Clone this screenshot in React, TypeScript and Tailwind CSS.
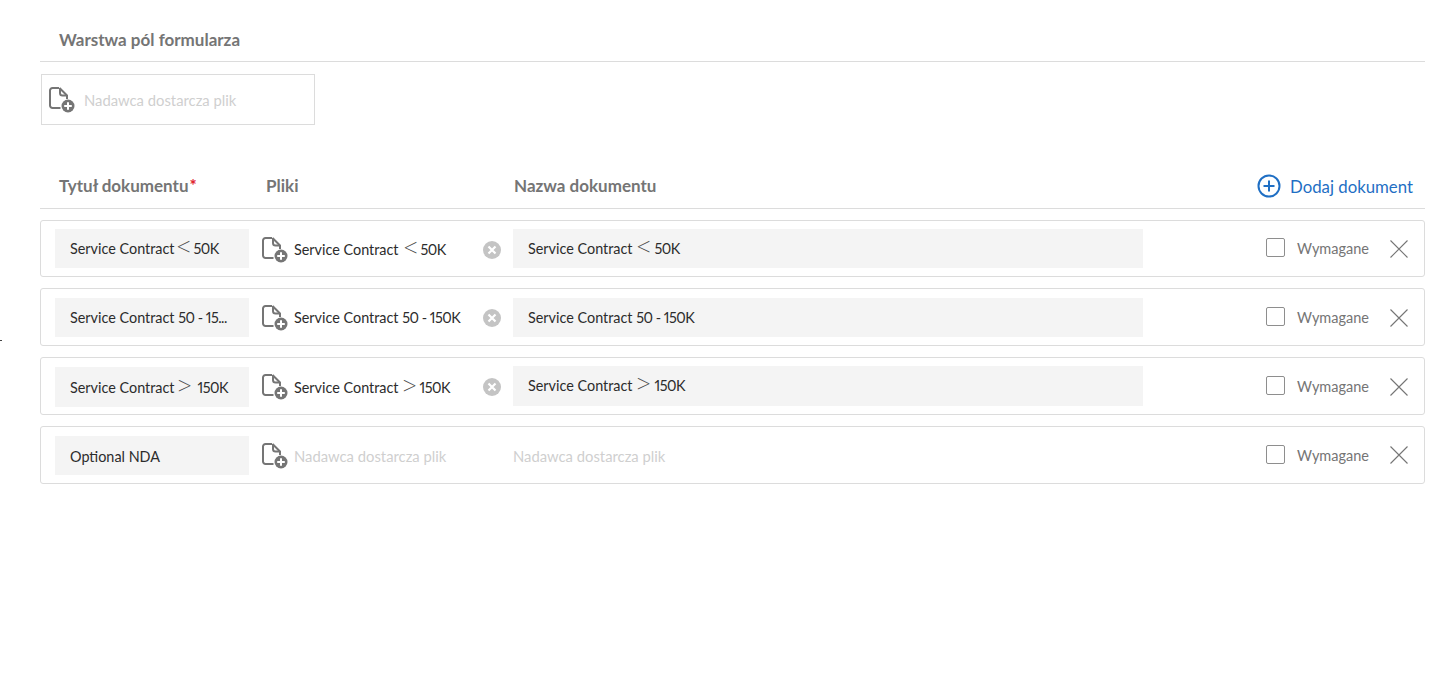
const FileIcon = () => (
  <svg width="26" height="26" viewBox="0 0 26 26" fill="none">
    <path d="M10 1H3.5A2.5 2.5 0 0 0 1 3.5V18.5A2.5 2.5 0 0 0 3.5 21h8" stroke="#757575" strokeWidth="2" />
    <path d="M10.5 1 18 8.5V12" stroke="#757575" strokeWidth="2" />
    <path d="M11 1V6a2.5 2.5 0 0 0 2.5 2.5H18" stroke="#757575" strokeWidth="2" />
    <circle cx="19" cy="19" r="6.5" fill="#757575" />
    <path d="M19 15.2v7.6M15.2 19h7.6" stroke="#fff" strokeWidth="2" />
  </svg>
);

const ClearIcon = () => (
  <svg width="18" height="18" viewBox="0 0 18 18" fill="none">
    <circle cx="9" cy="9" r="9" fill="#c4c4c4" />
    <path d="M5.5 5.5l7 7M12.5 5.5l-7 7" stroke="#fff" strokeWidth="2.2" />
  </svg>
);

const CloseIcon = () => (
  <svg width="20" height="20" viewBox="0 0 20 20" fill="none">
    <path d="M1.5 1.5l17 17M18.5 1.5l-17 17" stroke="#757575" strokeWidth="1.1" />
  </svg>
);

const Sym = ({ c, className }: { c: string; className: string }) => (
  <span
    className={`inline-block w-[14px] text-center font-['Noto_Sans',sans-serif] text-[25px] leading-[19px] font-extralight text-[#4b4b4b] align-[-2px] ${className}`}
  >
    {c}
  </span>
);

const Num = ({ children }: { children: React.ReactNode }) => (
  <span className="tracking-[-0.5px]">{children}</span>
);

type Row = {
  title: React.ReactNode;
  file?: React.ReactNode;
  name?: React.ReactNode;
  h: string;
  titleBox: string;
  nameBox: string;
  check: string;
  label: string;
  close: string;
};

const rows: Row[] = [
  {
    title: <>Service Contract<Sym c="<" className="ml-[2px] mr-[3px]" /><Num>50K</Num></>,
    file: <>Service Contract<Sym c="<" className="ml-[5px] mr-[3px]" /><Num>50K</Num></>,
    name: <>Service Contract<Sym c="<" className="ml-[4px] mr-[4px]" /><Num>50K</Num></>,
    h: "h-[57px]",
    titleBox: "h-[39px]",
    nameBox: "h-[39px]",
    check: "mb-[3px]",
    label: "",
    close: "",
  },
  {
    title: <>Service Contract <Num>50 - 15...</Num></>,
    file: <>Service Contract <Num>50 - 150K</Num></>,
    name: <>Service Contract <Num>50 - 150K</Num></>,
    h: "h-[58px]",
    titleBox: "h-[39px] mt-px",
    nameBox: "h-[39px] mt-px",
    check: "mb-[1px]",
    label: "mt-[2px]",
    close: "mt-[2px]",
  },
  {
    title: <>Service Contract<Sym c=">" className="ml-[3px] mr-[6px]" /><Num>150K</Num></>,
    file: <>Service Contract<Sym c=">" className="ml-[4px] mr-[3px]" /><Num>150K</Num></>,
    name: <>Service Contract<Sym c=">" className="ml-[4px] mr-[4px]" /><Num>150K</Num></>,
    h: "h-[58px]",
    titleBox: "h-[40px] mt-[2px]",
    nameBox: "h-[40px] pb-[2px]",
    check: "mb-[1px]",
    label: "mt-[2px]",
    close: "mt-[2px]",
  },
  {
    title: "Optional NDA",
    h: "h-[58px]",
    titleBox: "h-[39px] mt-px pt-[2px]",
    nameBox: "h-[39px] mt-[3px]",
    check: "mb-[1px]",
    label: "mt-[2px]",
    close: "",
  },
];

export default function App() {
  return (
    <div className="relative min-h-[689px] bg-white pl-10 pr-3 pt-[18px] font-['Lato',sans-serif] text-[14.4px] text-[#2c2c2c] proportional-nums">
      <span className="absolute left-0 top-[340px] h-px w-[2px] bg-[#444]" />
      <div className="flex h-[44px] items-center border-b border-[#dcdcdc] pl-[19px] text-[17px] font-bold text-[#757575]">
        Warstwa pól formularza
      </div>
      <div className="ml-px mt-3 flex h-[51px] w-[274px] items-center border border-[#dcdcdc] pl-[7px]">
        <FileIcon />
        <span className="ml-[9px] mt-[2px] text-[14.8px] text-[#cfcfcf]">Nadawca dostarcza plik</span>
      </div>
      <div className="mt-[38px] flex h-[46px] items-center border-b border-[#dcdcdc] pt-px text-[17px] font-bold text-[#757575]">
        <div className="ml-[19px] w-[207px]">
          Tytuł dokumentu<span className="ml-px text-[#e0202c]">*</span>
        </div>
        <div className="w-[248px]">Pliki</div>
        <div>Nazwa dokumentu</div>
        <div className="ml-auto mr-3 flex items-center gap-[9px] text-[16.8px] font-normal text-[#1f6fc4]">
          <svg width="24" height="24" viewBox="0 0 24 24" fill="none">
            <circle cx="12" cy="12" r="10.5" stroke="#1f6fc4" strokeWidth="2" />
            <path d="M12 6.5v11M6.5 12h11" stroke="#1f6fc4" strokeWidth="2" />
          </svg>
          <span className="mt-[2px]">Dodaj dokument</span>
        </div>
      </div>
      <div className="mt-[11px] flex flex-col gap-[11px]">
        {rows.map((r, i) => (
          <div key={i} className={`flex items-center rounded-[3px] border border-[#dcdcdc] pl-[14px] pr-[15px] ${r.h}`}>
            <div className={`flex w-[194px] items-center bg-[#f4f4f4] pl-[15px] ${r.titleBox}`}>
              <span className="whitespace-nowrap">{r.title}</span>
            </div>
            <div className="ml-[13px] mt-[2px] flex w-[251px] items-center">
              <FileIcon />
              {r.file ? (
                <>
                  <span className="ml-[6px] whitespace-nowrap">{r.file}</span>
                  <span className="ml-auto mr-[12px]"><ClearIcon /></span>
                </>
              ) : (
                <span className="ml-[6px] text-[14.8px] text-[#cfcfcf]">Nadawca dostarcza plik</span>
              )}
            </div>
            {r.name ? (
              <div className={`flex w-[630px] items-center bg-[#f4f4f4] pl-[15px] ${r.nameBox}`}>
                <span className="whitespace-nowrap">{r.name}</span>
              </div>
            ) : (
              <div className={`flex w-[630px] items-center text-[14.8px] text-[#cfcfcf] ${r.nameBox}`}>Nadawca dostarcza plik</div>
            )}
            <div className={`ml-auto h-[19px] w-[19px] rounded-[2px] border border-[#8e8e8e] bg-white ${r.check}`} />
            <span className={`ml-[12px] text-[14.5px] text-[#757575] ${r.label}`}>Wymagane</span>
            <span className={`ml-[20px] flex ${r.close}`}><CloseIcon /></span>
          </div>
        ))}
      </div>
    </div>
  );
}
